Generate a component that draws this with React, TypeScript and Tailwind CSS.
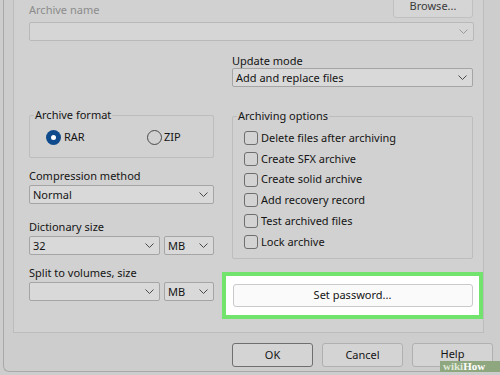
import type { ReactNode } from "react";

function Chevron({ light }: { light?: boolean }) {
    return (
        <svg width="9" height="5" viewBox="0 0 9 5" className="shrink-0">
            <path d="M0.5 0.5 L4.5 4.5 L8.5 0.5" fill="none" stroke={light ? "#9a9a9a" : "#4a4a4a"} strokeWidth="1" />
        </svg>
    );
}

function Select({ value, className, disabled }: { value?: string; className?: string; disabled?: boolean }) {
    return (
        <div
            className={
                "h-[19px] flex items-center justify-between pl-[3px] pr-[5px] border rounded-[2px] " +
                (disabled ? "border-[#b9b9b9] bg-[#d6d6d6] " : "border-[#a5a5a5] bg-[#d9d9d9] ") +
                (className ?? "")
            }
        >
            <span className="text-[#141414] leading-none">{value}</span>
            <Chevron light={disabled} />
        </div>
    );
}

function Label({ children, className, muted }: { children: ReactNode; className?: string; muted?: boolean }) {
    return (
        <div className={"h-[14px] leading-[14px] " + (muted ? "text-[#8c8c8c] " : "text-[#141414] ") + (className ?? "")}>
            {children}
        </div>
    );
}

function Group({ title, children, className }: { title: string; children: ReactNode; className?: string }) {
    return (
        <div className={"relative border border-[#bdbdbd] rounded-[2px] " + (className ?? "")}>
            <span className="absolute -top-[8px] left-[4px] px-[1px] bg-[#d1d1d1] leading-[14px] text-[#141414]">{title}</span>
            {children}
        </div>
    );
}

function Check({ label }: { label: string }) {
    return (
        <div className="h-[20.7px] flex items-center gap-[3px]">
            <div className="w-[14px] h-[14px] rounded-[3px] border border-[#6e6e6e] bg-[#d3d3d3]" />
            <span className="text-[#141414]">{label}</span>
        </div>
    );
}

function Button({ children, className }: { children: ReactNode; className?: string }) {
    return (
        <div className={"flex items-center justify-center border rounded-[3px] " + (className ?? "")}>
            {children}
        </div>
    );
}

export default function App() {
    return (
        <div
            className="w-[500px] h-[375px] overflow-hidden bg-[#cdcdcd] text-[11px] text-[#141414]"
            style={{ fontFamily: '"Noto Sans", "Liberation Sans", sans-serif' }}
        >
            <div className="ml-[3px] h-[372px] border-l border-b border-[#a9a9a9] rounded-bl-[6px] flex flex-col">
                {/* main panel */}
                <div className="ml-[9px] w-[471px] h-[333px] bg-[#d1d1d1] border-l border-r border-b border-[#bcbcbc] pl-[15px] pr-[9px]">
                    <div className="h-[20px] flex justify-between">
                        <Label muted className="mt-[3px]">Archive name</Label>
                        <Button className="-mt-[5px] mr-[1px] w-[80px] h-[23px] border-[#c0c0c0] bg-[#d5d5d5] text-[#3a3a3a]">
                            Browse...
                        </Button>
                    </div>
                    <Select disabled className="mt-[2px] w-[445px]" />

                    <div className="mt-[13px] grid grid-cols-[185px_241px] gap-x-[18px]">
                        {/* left column */}
                        <div className="pt-[61px]">
                            <Group title="Archive format" className="h-[43px]">
                                <div className="flex items-center h-full pl-[16px] pt-[1px]">
                                    <div className="flex items-center gap-[2px] w-[101px]">
                                        <div className="w-[15px] h-[15px] rounded-full bg-[#0e4a8c] flex items-center justify-center">
                                            <div className="w-[5px] h-[5px] rounded-full bg-white" />
                                        </div>
                                        <span className="ml-[1px]">RAR</span>
                                    </div>
                                    <div className="flex items-center gap-[2px]">
                                        <div className="w-[15px] h-[15px] rounded-full border border-[#4a4a4a]" />
                                        <span>ZIP</span>
                                    </div>
                                </div>
                            </Group>

                            <Label className="mt-[11px]">Compression method</Label>
                            <Select value="Normal" className="mt-[2px] w-[185px]" />

                            <Label className="mt-[16px]">Dictionary size</Label>
                            <div className="mt-[2px] flex gap-[4px]">
                                <Select value="32" className="w-[131px]" />
                                <Select value="MB" className="w-[50px]" />
                            </div>

                            <Label className="mt-[11px]">Split to volumes, size</Label>
                            <div className="mt-[2px] flex gap-[4px]">
                                <Select className="w-[131px]" />
                                <Select value="MB" className="w-[50px]" />
                            </div>
                        </div>

                        {/* right column */}
                        <div>
                            <Label>Update mode</Label>
                            <Select value="Add and replace files" className="w-[241px]" />

                            <Group title="Archiving options" className="mt-[29px] h-[143px]">
                                <div className="pl-[11px] pt-[11px]">
                                    <Check label="Delete files after archiving" />
                                    <Check label="Create SFX archive" />
                                    <Check label="Create solid archive" />
                                    <Check label="Add recovery record" />
                                    <Check label="Test archived files" />
                                    <Check label="Lock archive" />
                                </div>
                            </Group>

                            <div className="mt-[13px] -ml-[10px] w-[261px] h-[47px] border-[4px] border-[#72e46e] bg-white flex items-center justify-center">
                                <Button className="w-[240px] h-[23px] border-[#c9c9c9] bg-[#fafafa]">Set password...</Button>
                            </div>
                        </div>
                    </div>
                </div>

                {/* bottom buttons */}
                <div className="mt-[10px] pl-[228px] flex gap-[9px]">
                    <Button className="w-[81px] h-[24px] border-[#6f6f6f] bg-[#d4d4d4]">OK</Button>
                    <Button className="w-[81px] h-[24px] border-[#b0b0b0] bg-[#d4d4d4]">Cancel</Button>
                    <Button className="w-[81px] h-[24px] items-start pt-[4px] border-[#b0b0b0] bg-[#d4d4d4]">
                        <span className="leading-[12px]">Help</span>
                    </Button>
                </div>
            </div>
            <div
                className="relative -mt-[11px] ml-auto w-[60px] h-[11px] bg-[#8fa77f] text-white text-[11px] font-bold leading-[11px] pl-[3px]"
                style={{ fontFamily: '"Liberation Serif", serif' }}
            >
                <span className="text-[#dfe8d6]">wiki</span>How
            </div>
        </div>
    );
}
